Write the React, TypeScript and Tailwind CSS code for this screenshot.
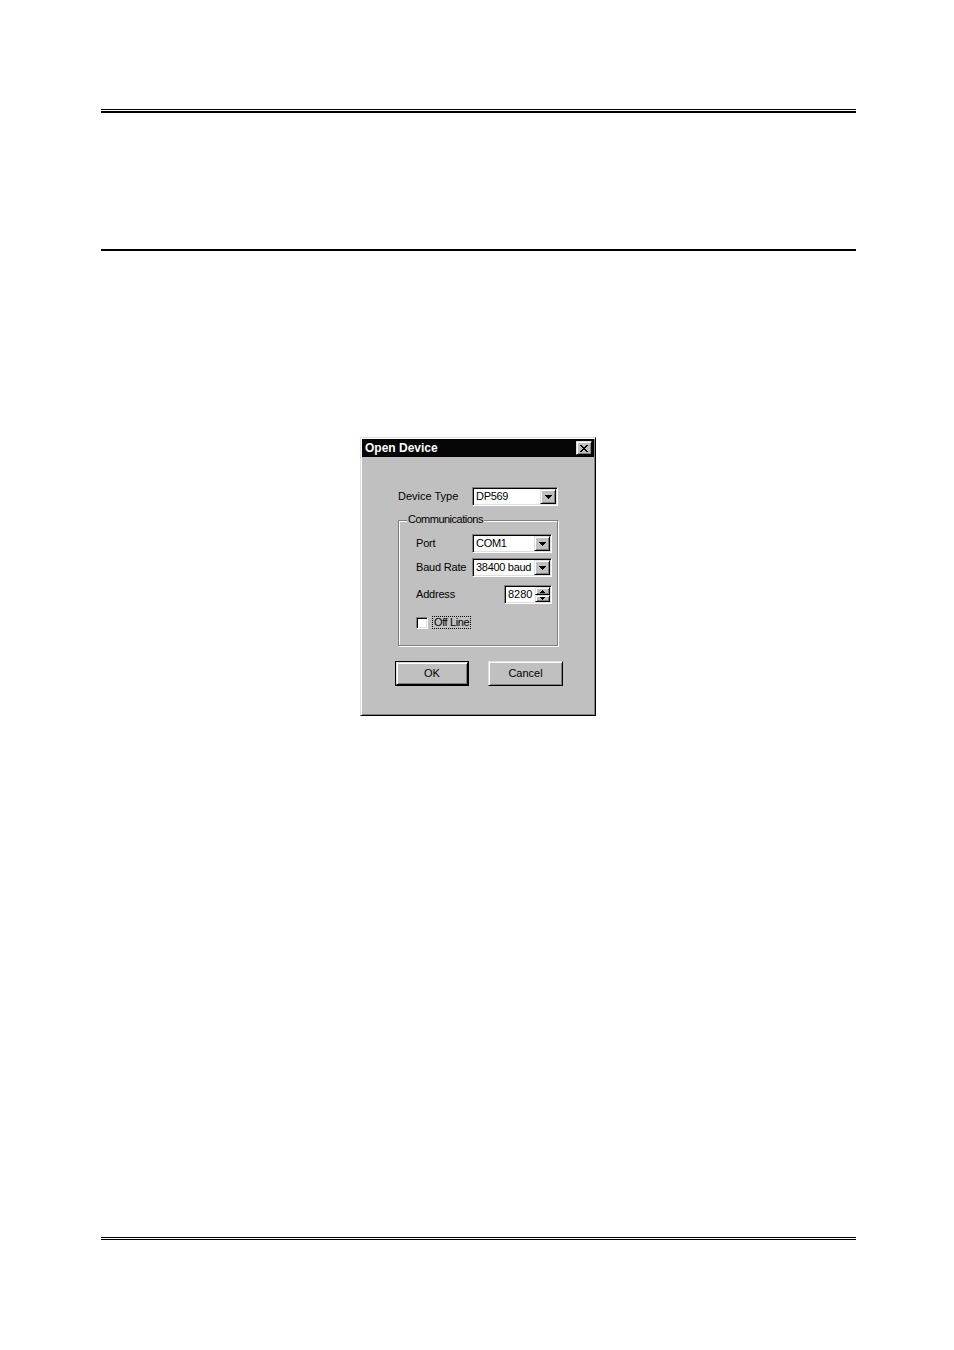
import React from 'react';

const raised =
    'bg-[#c0c0c0] border border-t-[#dfdfdf] border-l-[#dfdfdf] border-r-black border-b-black shadow-[inset_1px_1px_0_#fff,inset_-1px_-1px_0_#808080]';
const sunken =
    'bg-white border border-t-[#808080] border-l-[#808080] border-r-white border-b-white shadow-[inset_1px_1px_0_#000,inset_-1px_-1px_0_#dfdfdf]';

const DownArrow = () => (
    <svg width="7" height="4" viewBox="0 0 7 4" shapeRendering="crispEdges">
        <polygon points="0,0 7,0 3.5,4" fill="#000" />
    </svg>
);

const ComboBox = ({ value, width }: { value: string; width: string }) => (
    <div className={`${sunken} ${width} h-[19px] flex items-center p-px`}>
        <span className="flex-1 pl-[2px] leading-none whitespace-nowrap overflow-hidden tracking-[-0.3px]">{value}</span>
        <div className={`${raised} w-[16px] h-[15px] flex items-center justify-center shrink-0`}>
            <DownArrow />
        </div>
    </div>
);

const SpinBox = ({ value }: { value: string }) => (
    <div className={`${sunken} w-[48px] h-[19px] flex items-center p-px`}>
        <span className="flex-1 pl-[2px] leading-none">{value}</span>
        <div className="flex flex-col w-[15px] h-[15px] shrink-0">
            <div className={`${raised} h-[8px] flex items-center justify-center`}>
                <svg width="5" height="3" viewBox="0 0 5 3" shapeRendering="crispEdges">
                    <polygon points="2.5,0 5,3 0,3" fill="#000" />
                </svg>
            </div>
            <div className={`${raised} h-[7px] flex items-center justify-center`}>
                <svg width="5" height="3" viewBox="0 0 5 3" shapeRendering="crispEdges">
                    <polygon points="0,0 5,0 2.5,3" fill="#000" />
                </svg>
            </div>
        </div>
    </div>
);

const Row = ({ label, children }: { label: string; children: React.ReactNode }) => (
    <div className="flex items-center">
        <span className="w-[56px] leading-none whitespace-nowrap tracking-[-0.2px]">{label}</span>
        {children}
    </div>
);

const OpenDeviceDialog = () => (
    <div
        className="w-[236px] h-[279px] bg-[#c0c0c0] p-px flex flex-col border border-t-[#dfdfdf] border-l-[#dfdfdf] border-r-black border-b-black shadow-[inset_1px_1px_0_#fff,inset_-1px_-1px_0_#808080] text-[11px] text-black"
        style={{ fontFamily: '"Liberation Sans", Arial, sans-serif' }}
    >
        {/* title bar */}
        <div className="h-[18px] bg-[#050505] flex items-center pl-[3px] pr-[2px]">
            <span className="flex-1 text-white font-bold text-[12px] leading-none">Open Device</span>
            <div className={`${raised} w-[16px] h-[14px] flex items-center justify-center`}>
                <svg width="8" height="7" viewBox="0 0 8 7" shapeRendering="crispEdges">
                    <path d="M0 0h2v1h1v1h2V1h1V0h2v1H7v1H6v1H5v1h1v1h1v1h1v1H6V6H5V5H3v1H2v1H0V6h1V5h1V4h1V3H2V2H1V1H0z" fill="#000" />
                </svg>
            </div>
        </div>

        {/* body */}
        <div className="flex flex-col pl-[36px] pt-[30px]">
            <div className="flex items-center">
                <span className="w-[74px] leading-none">Device Type</span>
                <ComboBox value="DP569" width="w-[86px]" />
            </div>

            <div className="relative mt-[14px] w-[160px] h-[126px] border border-[#808080] shadow-[inset_1px_1px_0_#fff,1px_1px_0_#fff]">
                <span className="absolute left-[8px] top-[-7px] bg-[#c0c0c0] px-px leading-none tracking-[-0.5px]">
                    Communications
                </span>
                <div className="flex flex-col pl-[17px] pt-[13px]">
                    <Row label="Port">
                        <ComboBox value="COM1" width="w-[80px]" />
                    </Row>
                    <div className="mt-[5px]">
                        <Row label="Baud Rate">
                            <ComboBox value="38400 baud" width="w-[80px]" />
                        </Row>
                    </div>
                    <div className="mt-[8px] flex items-center">
                        <span className="w-[88px] leading-none tracking-[-0.2px]">Address</span>
                        <SpinBox value="8280" />
                    </div>
                    <div className="mt-[12px] flex items-center">
                        <div className={`${sunken} w-[12px] h-[12px]`} />
                        <span className="ml-[4px] border border-dotted border-black px-px leading-[11px] tracking-[-0.4px]">
                            Off Line
                        </span>
                    </div>
                </div>
            </div>

            <div className="flex mt-[15px] -ml-[3px]">
                <div className="border border-black">
                    <div className={`${raised} w-[72px] h-[23px] flex items-center justify-center leading-none`}>OK</div>
                </div>
                <div className={`${raised} ml-[19px] w-[75px] h-[25px] flex items-center justify-center leading-none`}>
                    Cancel
                </div>
            </div>
        </div>
    </div>
);

export default function App() {
    return (
        <div className="w-[954px] min-h-[1350px] bg-white">
            <div className="ml-[101px] w-[755px] pt-[109px]">
                <div className="h-px bg-black" />
                <div className="h-[2px] bg-black mt-px" />

                <div className="h-[2px] bg-black mt-[136px]" />

                <div className="mt-[186px] ml-[259px]">
                    <OpenDeviceDialog />
                </div>

                <div className="h-px bg-black mt-[521px]" />
                <div className="h-px bg-black mt-px" />
            </div>
        </div>
    );
}
